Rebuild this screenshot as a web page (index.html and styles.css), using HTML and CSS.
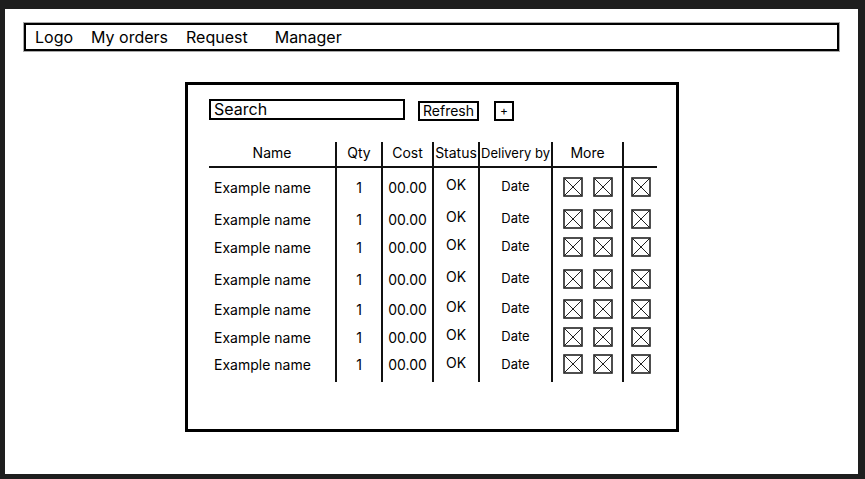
FILE: index.html
```html
<!DOCTYPE html>
<html lang="en">
<head>
  <meta charset="UTF-8" />
  <meta name="viewport" content="width=device-width, initial-scale=1.0" />
  <title>Orders wireframe</title>
  <link rel="stylesheet" href="styles.css">
</head>

<body>
  <div class="canvas">
    <!-- Top navigation -->
    <nav class="nav">
      <span class="nav-item">Logo</span>
      <span class="nav-item">My orders</span>
      <span class="nav-item">Request</span>
      <span class="nav-item nav-far">Manager</span>
    </nav>

    <!-- Orders panel -->
    <div class="panel">
      <div class="toolbar">
        <div class="search">Search</div>
        <div class="btn">Refresh</div>
        <div class="btn btn-add">+</div>
      </div>

      <div class="grid">
        <div class="row head">
          <div class="cell">Name</div>
          <div class="cell">Qty</div>
          <div class="cell">Cost</div>
          <div class="cell">Status</div>
          <div class="cell small">Delivery by</div>
          <div class="cell">More</div>
          <div class="cell"></div>
        </div>
      </div>
    </div>
  </div>

  <script>
    const rows = 7;
    const box = '<svg class="xbox" viewBox="0 0 20 20"><rect x="1" y="1" width="18" height="18"/><line x1="1.5" y1="1.5" x2="18.5" y2="18.5"/><line x1="18.5" y1="1.5" x2="1.5" y2="18.5"/></svg>';
    const grid = document.querySelector(".grid");
    for (let i = 0; i < rows; i++) {
      const row = document.createElement("div");
      row.className = "row";
      row.innerHTML = `
        <div class="cell name">Example name</div>
        <div class="cell">1</div>
        <div class="cell">00.00</div>
        <div class="cell status">OK</div>
        <div class="cell small date">Date</div>
        <div class="cell more">${box}${box}</div>
        <div class="cell">${box}</div>
      `;
      grid.appendChild(row);
    }
  </script>
</body>
</html>
```

FILE: styles.css
```css
body {
  font-family: 'Inter', 'Liberation Sans', sans-serif;
  background-color: #1e1e1e;
  margin: 0;
  color: #000;
}

.canvas {
  background: #fff;
  margin: 9px 7px 0 5px;
  height: 465px;
  overflow: hidden;
}

.nav {
  display: flex;
  align-items: center;
  gap: 18px;
  height: 28px;
  margin: 14px 19px 0;
  padding: 0 9px;
  border: 2px solid #000;
  box-shadow: 0 0 0 1px #aaa;
  box-sizing: border-box;
  font-size: 16px;
}

.nav-far {
  margin-left: 9px;
}

.panel {
  width: 494px;
  height: 350px;
  margin: 31px 0 0 180px;
  padding: 13px 21px 0;
  border: 3px solid #000;
  box-sizing: border-box;
}

.toolbar {
  display: flex;
  align-items: center;
}

.search {
  width: 196px;
  height: 21px;
  border: 2px solid #000;
  box-sizing: border-box;
  padding-left: 3px;
  font-size: 16px;
  line-height: 17px;
}

.btn {
  height: 20px;
  margin-left: 13px;
  padding: 0 3px;
  border: 2px solid #000;
  box-sizing: border-box;
  font-size: 14px;
  line-height: 16px;
  margin-top: 3px;
}

.btn-add {
  width: 20px;
  margin-left: 15px;
  padding: 0;
  text-align: center;
  font-size: 12px;
}

.grid {
  display: grid;
  grid-template-columns: 126px 46px 51px 46px 73px 71px 35px;
  grid-template-rows: 26px 38px 26px 30px 34px 26px 30px 30px;
  width: 448px;
  margin-top: 21px;
  font-size: 14px;
}

.row {
  display: contents;
}

.cell {
  display: flex;
  align-items: center;
  justify-content: center;
  border-left: 2px solid #111;
}

.cell:first-child {
  border-left: none;
}

.head .cell {
  border-bottom: 2px solid #111;
  padding-bottom: 3px;
}

.small {
  font-size: 13px;
}

.name {
  justify-content: flex-start;
  padding-left: 5px;
}

.status {
  padding-bottom: 5px;
}

.date {
  padding-bottom: 2px;
}

.more {
  gap: 10px;
}

.row:last-child .cell {
  padding-bottom: 6px;
}

.row:last-child .status {
  padding-bottom: 10px;
}

.xbox {
  width: 20px;
  height: 20px;
  fill: none;
  stroke: #222;
}

.xbox rect {
  stroke-width: 1.6;
}

.xbox line {
  stroke-width: 1;
}
```
